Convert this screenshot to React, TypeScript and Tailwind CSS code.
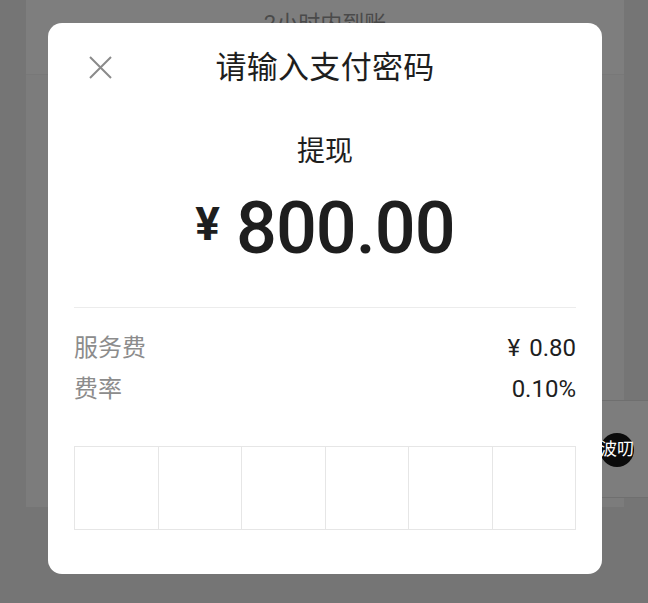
const font = { fontFamily: 'Roboto, "Noto Sans CJK SC", sans-serif' };

const Cells = () => (
  <div className="mt-[39px] flex h-[84px] border border-[#e6e6e6]">
    {[0, 1, 2, 3, 4, 5].map((i) => (
      <div
        key={i}
        className={`flex-1 ${i > 0 ? "border-l border-[#e6e6e6]" : ""}`}
      />
    ))}
  </div>
);

const CloseIcon = () => (
  <svg width="23" height="23" viewBox="0 0 23 23" fill="none">
    <path d="M1 1L22 22M22 1L1 22" stroke="#8a8a8a" strokeWidth="2" />
  </svg>
);

export default function App() {
  return (
    <div
      className="relative h-[603px] w-[648px] overflow-hidden bg-[#757575]"
      style={font}
    >
      {/* page behind the dim layer */}
      <div className="ml-[26px] flex h-[507px] w-[598px] flex-col bg-[#7c7c7c]">
        <div className="flex h-[75px] justify-center border-b border-[#787878] bg-[#7e7e7e] pt-[7px]">
          <span className="text-[22px] text-[#4a4a4a]">2小时内到账</span>
        </div>
      </div>

      {/* floating helper */}
      <div className="absolute left-[600px] top-[400px] h-[98px] w-[48px] border-y border-[#6f6f6f] bg-[#7d7d7d]">
        <div className="absolute left-0 top-[32px] flex h-[34px] w-[34px] items-center justify-center whitespace-nowrap rounded-full bg-[#0b0b0b] text-[17px] text-white">
          波叨
        </div>
      </div>

      {/* modal */}
      <div className="absolute left-[48px] top-[23px] flex h-[551px] w-[554px] flex-col rounded-[14px] bg-white px-[26px]">
        <div className="relative flex h-[90px] items-center justify-center">
          <button className="absolute left-[15px] top-[33px]">
            <CloseIcon />
          </button>
          <span className="text-[31px] tracking-[0.3px] text-[#1e1e1e]">请输入支付密码</span>
        </div>

        <div className="mt-[19px] text-center text-[28px] leading-[40px] text-[#1e1e1e]">
          提现
        </div>

        <div className="mt-[17px] flex h-[80px] items-center justify-center text-[#1e1e1e]">
          <span className="mr-[16px] mt-[-10px] text-[46px] font-bold">¥</span>
          <span className="text-[72px] font-medium tracking-[-1px]">800.00</span>
        </div>

        <div className="mt-[38px] h-px bg-[#ececec]" />

        <div className="mt-[22px] flex flex-col gap-[5px] text-[24px] leading-[36px]">
          <div className="flex justify-between">
            <span className="text-[#8c8c8c]">服务费</span>
            <span className="text-[#1e1e1e]">
              ¥<span className="ml-[9px]">0.80</span>
            </span>
          </div>
          <div className="flex justify-between">
            <span className="text-[#8c8c8c]">费率</span>
            <span className="text-[#1e1e1e]">0.10%</span>
          </div>
        </div>

        <Cells />
      </div>
    </div>
  );
}
